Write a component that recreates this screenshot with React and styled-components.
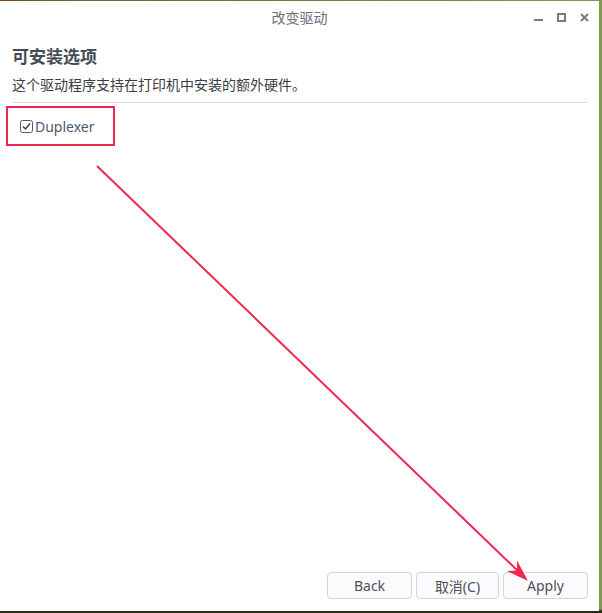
import React from "react";
import styled, { createGlobalStyle } from "styled-components";

const Global = createGlobalStyle`
  html, body { margin: 0; padding: 0; }
  body { font-family: "Noto Sans CJK SC", "Noto Sans", sans-serif; }
`;

const Desktop = styled.div`
  position: relative;
  width: 602px;
  height: 613px;
  overflow: hidden;
  background:
    linear-gradient(180deg, transparent 0, transparent 609px, #2a2c12 611px),
    linear-gradient(90deg, #7a4a20 0%, #5d6a3a 12%, #6d8448 60%, #7d9a52 100%);
  padding-top: 1px;
  box-sizing: border-box;
`;

const Window = styled.div`
  width: 599px;
  height: 610px;
  background: #ffffff;
  display: flex;
  flex-direction: column;
`;

const TitleBar = styled.div`
  position: relative;
  height: 34px;
  display: flex;
  align-items: center;
  justify-content: center;
  flex-shrink: 0;
`;

const Title = styled.div`
  font-size: 14px;
  color: #6a6f7a;
  margin-top: -3px;
`;

const Controls = styled.div`
  position: absolute;
  right: 10px;
  top: 12px;
  display: flex;
  gap: 14px;
  align-items: center;
`;

const Ctrl = styled.svg`
  width: 9px;
  height: 9px;
  display: block;
`;

const Content = styled.div`
  flex: 1;
  padding: 9px 11px 0 12px;
  display: flex;
  flex-direction: column;
`;

const Heading = styled.div`
  font-size: 17px;
  font-weight: 700;
  color: #464a52;
  line-height: 24px;
`;

const Desc = styled.div`
  margin-top: 6px;
  font-size: 14px;
  color: #3b3d44;
  line-height: 20px;
`;

const Divider = styled.div`
  margin-top: 8px;
  height: 1px;
  background: #dcdde0;
`;

const OptionBox = styled.div`
  margin-top: 3px;
  margin-left: -6px;
  width: 109px;
  height: 40px;
  box-sizing: border-box;
  border: 2px solid #ee2750;
  display: flex;
  align-items: center;
  padding-left: 12px;
  gap: 2px;
`;

const Check = styled.svg`
  width: 13px;
  height: 13px;
  display: block;
`;

const OptionLabel = styled.span`
  font-family: "Noto Sans", "Noto Sans CJK SC", sans-serif;
  font-size: 14px;
  color: #4b5870;
`;

const Footer = styled.div`
  display: flex;
  justify-content: flex-end;
  gap: 4px;
  padding: 0 11px 12px 0;
`;

const Button = styled.button`
  width: ${(p) => p.$w || 85}px;
  height: 27px;
  border: 1px solid #d2d5dc;
  border-radius: 4px;
  background: #fbfbfd;
  color: #4d5059;
  font-family: "Noto Sans", "Noto Sans CJK SC", sans-serif;
  font-size: 14px;
  padding: 0;
  display: flex;
  align-items: center;
  justify-content: center;
`;

const Overlay = styled.svg`
  position: absolute;
  left: 0;
  top: 0;
  width: 602px;
  height: 613px;
  pointer-events: none;
`;

export default function App() {
  const tip = [528, 581];
  return (
    <>
      <Global />
      <Desktop>
        <Window>
          <TitleBar>
            <Title>改变驱动</Title>
            <Controls>
              <Ctrl viewBox="0 0 9 9">
                <rect x="0" y="6" width="9" height="2" fill="#747b8c" />
              </Ctrl>
              <Ctrl viewBox="0 0 9 9">
                <rect x="1" y="1" width="7" height="7" fill="none" stroke="#747b8c" strokeWidth="2" />
              </Ctrl>
              <Ctrl viewBox="0 0 9 9">
                <path d="M1 1 L8 8 M8 1 L1 8" stroke="#747b8c" strokeWidth="2" />
              </Ctrl>
            </Controls>
          </TitleBar>
          <Content>
            <Heading>可安装选项</Heading>
            <Desc>这个驱动程序支持在打印机中安装的额外硬件。</Desc>
            <Divider />
            <OptionBox>
              <Check viewBox="0 0 13 13">
                <rect x="0.5" y="0.5" width="12" height="12" rx="2" fill="#fff" stroke="#555a63" />
                <path d="M3 6.5 L5.5 9 L10 3.5" fill="none" stroke="#3d4048" strokeWidth="1.5" />
              </Check>
              <OptionLabel>Duplexer</OptionLabel>
            </OptionBox>
          </Content>
          <Footer>
            <Button $w={85}>Back</Button>
            <Button $w={83}>取消(C)</Button>
            <Button $w={85}>Apply</Button>
          </Footer>
        </Window>
        <Overlay viewBox="0 0 602 613">
          <line x1="97" y1="166" x2="520" y2="573" stroke="#f0284c" strokeWidth="2" />
          <polygon
            points={`${tip[0]},${tip[1]} 507,571 517,570.5 517,560.5`}
            fill="#f0284c"
          />
        </Overlay>
      </Desktop>
    </>
  );
}
